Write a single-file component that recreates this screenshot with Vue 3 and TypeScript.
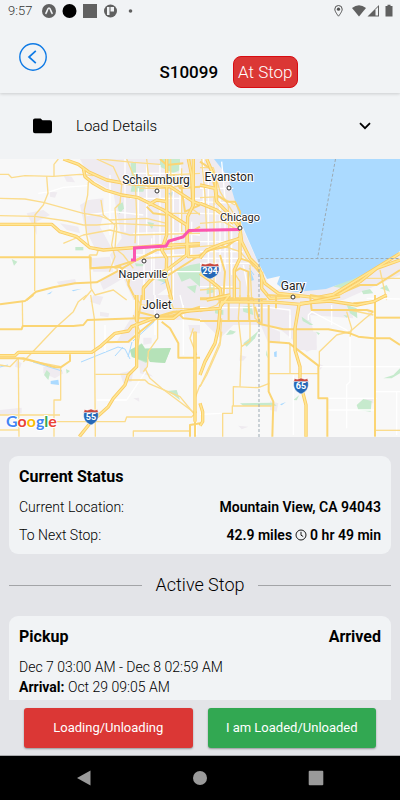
<script setup lang="ts">
import { ref } from 'vue'

interface Tile {
  id: string
  transform: string
  urban: string[]
  parks: string[]
  water: string[]
  streets: string[]
  minor: string[]
  medium: string[]
  major: string[]
}

interface City {
  name: string
  x: number
  y: number
  dotX: number
  dotY: number
  small?: boolean
}

const tiles: Tile[] = [
  {
    id: 'nw',
    transform: 'translate(0 155) scale(0.33333)',
    urban: [
      'M240 12H600V435H540L500 400L450 435H400L370 370L310 405L300 380L350 350L330 300L365 250L350 170L340 110L270 70Z',
      'M265 135L310 130V180L300 215L335 280L290 290L255 220L240 150Z',
      'M80 175L130 165L150 180L110 200V240L95 205Z',
      'M150 110L172 112L165 128L150 125Z',
      'M180 205L235 215L240 235L200 225Z',
      'M190 60L215 65L225 82L200 80Z',
      'M272 310L330 305L340 350L280 350Z',
      'M170 380L225 372L230 385L180 395Z',
    ],
    parks: [
      'M226 276H250V286H226Z', 'M35 312L52 320L42 332Z', 'M392 25L408 20V60L395 72Z', 'M395 92L435 95L430 110H392Z',
      'M352 150L368 142L372 160L358 178Z', 'M440 200L462 205L456 222Z', 'M480 12H540V45L520 55L480 35Z',
      'M528 345L570 330L600 325V395L570 370L545 380Z', 'M470 375L505 365L500 385Z', 'M405 325L435 328L428 334H408Z', 'M560 395L590 390L585 415Z',
    ],
    water: ['M505 115L520 110L515 125Z', 'M480 390L505 372L500 382Z', 'M140 418L158 408L150 417Z', 'M215 406L245 401L220 409Z'],
    streets: [
      'M115 115L150 110L190 97L262 92', 'M330 60V240', 'M375 12V230', 'M415 100V270', 'M440 20V240', 'M462 230V420', 'M480 30V300',
      'M540 30V260', 'M400 55H600', 'M390 130H600', 'M400 235L520 232L600 240', 'M400 300H600', 'M440 350H600', 'M520 90V435', 'M575 200V320',
      'M432 270V435', 'M455 250V380', 'M260 180L340 170L430 180',
    ],
    minor: [
      'M0 58H25L35 68L75 62L160 64L240 58L280 62', 'M162 64V28L175 12', 'M0 130L75 132L130 142L250 175L300 183L330 195L440 190L500 205',
      'M140 64L144 115L130 150L105 180V185', 'M0 182L105 184L200 198L250 210H290L350 205L500 213', 'M104 184V408', 'M265 80L263 120L253 165L260 240L268 278L295 285L290 300H268',
      'M290 12L340 35L365 90L360 145L345 160L350 220L345 280L370 300L400 340', 'M303 135L310 180L345 210L335 270L345 305L328 350',
      'M190 265L250 240L330 225L390 240L600 235', 'M268 300L273 400L285 420L340 405L380 435', 'M300 12L400 22L480 28', 'M405 60L410 180L405 265',
      'M380 12L400 60L450 100', 'M420 100L500 100L580 85', 'M500 60L600 55', 'M512 12L515 435', 'M545 40V230', 'M570 12L575 160L600 180', 'M250 435L275 405',
      'M335 335L370 350L390 400', 'M430 310L600 300', 'M500 175L600 175', 'M440 12L445 60L500 80',
    ],
    medium: [
      'M0 307H272V340L345 335L410 315L470 285', 'M80 435L108 410L160 397L225 385L290 382L350 350L410 315L470 285L600 273', 'M540 70L555 170L600 150',
      'M272 340L360 335L390 360L385 390L408 435', 'M520 60L540 100L600 95', 'M500 260L540 250L600 215', 'M480 12L500 30L550 25', 'M490 370L600 300',
      'M440 155L460 175L500 180', 'M430 435V395L490 350',
    ],
    major: [
      'M0 208H155L180 230L230 245L270 278L310 285L480 272L600 266', 'M190 12L235 28L265 50L320 75L375 85L450 90L510 95L580 140L600 148',
      'M250 40L255 65L280 85L315 105L365 120L415 128L490 165L560 210L565 305H600', 'M500 12V240L485 285L500 310L498 370L515 435',
      'M445 150L470 135L500 140', 'M565 12L575 60L580 150L563 185L560 300L500 345L460 365L430 400V435', 'M580 12V150',
    ],
  },
  {
    id: 'ne',
    transform: 'translate(200 155) scale(0.33333)',
    urban: ['M0 12H45L85 60L130 225L175 325L215 405L380 400L450 375L570 310L600 300V360L430 435H0Z'],
    parks: ['M20 400L40 390L48 410L20 418Z', 'M400 395L480 355L530 345L430 400Z', 'M485 408L510 402L520 415L490 418Z', 'M0 345L15 340V365Z', 'M540 400L560 390L570 410Z'],
    water: ['M145 350L152 347L162 375L152 378Z'],
    streets: [
      'M0 100L100 100', 'M0 140L110 145', 'M0 175L110 178', 'M0 260H120', 'M0 290H130', 'M0 310H140', 'M0 395H100', 'M25 60V330', 'M45 150V435',
      'M60 130V350', 'M75 200V435', 'M95 190V360', 'M10 12V150', 'M65 20L75 130', 'M130 330L150 435', 'M0 325H150',
    ],
    minor: [
      'M0 38H40L60 110L110 190L125 240', 'M5 12L15 120L20 230', 'M0 128L60 125L105 150', 'M42 125V430', 'M0 205L70 200L120 230', 'M85 150L90 430',
      'M0 275L60 270L120 290L160 335', 'M150 330L155 435', 'M30 435V350', 'M0 405L60 400L120 400', 'M500 370H600', 'M540 345L560 435', 'M100 350L120 380V435',
    ],
    medium: [
      'M0 20L30 40L50 120L80 140H105L120 170V230', 'M0 300L30 285L80 275L120 245', 'M120 310L150 320L190 365', 'M103 435V350L120 340L145 350V435',
      'M400 425L480 390H530L600 345', 'M60 300L75 350L70 435', 'M0 430H160',
    ],
    major: [
      'M0 90L45 100L50 140L90 180L120 220L125 260L150 310L175 335L195 385L235 415L350 428L400 418L600 295', 'M120 235V310L103 345V435',
      'M20 12L45 70L50 130', 'M0 145L50 165L100 205', 'M0 310L20 285L70 265L120 250', 'M185 350V400L210 430L300 424', 'M0 355L35 380L60 400L65 435',
      'M340 430L410 422L480 380L530 340L600 315',
    ],
  },
  {
    id: 'sw',
    transform: 'translate(0 295) scale(0.33333)',
    urban: [
      'M415 0H600V70L530 75L480 60L420 80L390 145L350 140L380 90L400 60Z', 'M280 0L310 5L300 30L270 20Z', 'M50 195L65 205L60 220L45 215Z', 'M130 215L180 215L190 235L165 250L130 235Z',
      'M415 175L440 185V230L460 245L420 235Z', 'M360 235L400 225L395 260L370 265Z', 'M300 50L328 55L325 67L300 63Z', 'M400 310L417 308L418 320Z', 'M430 128H455V145L430 150Z',
      'M0 345L65 338V355L0 360Z', 'M565 90H600V115H570Z',
    ],
    parks: ['M390 165L425 145L435 160L513 159L495 203L450 200L440 180V205L395 185Z', 'M140 225L150 235L145 255L132 240Z', 'M198 222L210 228L200 236Z', 'M500 288L530 285L540 315L520 300Z'],
    water: ['M152 258L175 254L177 270L152 267Z'],
    streets: ['M290 315H380L440 225', 'M315 90V170', 'M465 0V120', 'M550 30V180', 'M580 200L590 420', 'M540 0L550 40'],
    minor: [
      'M67 20L68 95', 'M70 200L165 100L220 50L235 20L260 0', 'M272 0L283 70L286 425', 'M55 190L57 425', 'M182 215V315H162V425', 'M286 238H385', 'M0 360H180',
      'M170 380H375L380 366H575L590 350', 'M400 425V408H570', 'M435 220L450 250L485 280L585 355', 'M385 255H435L445 265L540 305L585 360', 'M0 405H57',
      'M473 68V130L445 170L442 215L430 230', 'M400 60L420 110L412 160', 'M505 0L520 40L600 42', 'M580 100L570 130L590 180', 'M400 0L425 30L520 40', 'M0 210L30 215L55 190L182 215',
      'M585 355V425', 'M600 270L585 310V360',
    ],
    medium: [
      'M0 28L75 18L100 0', 'M0 103H65L68 93H220L250 90L262 75L410 70L500 68L600 40', 'M0 190H70L165 217H182L210 198V178', 'M315 142L385 140L420 110L470 70L520 60L600 35',
      'M485 80L510 100L535 145V188H600', 'M412 0V50L470 65L520 50L600 45', 'M425 0L420 40L410 100', 'M570 425V390L600 385', 'M470 68L530 50L550 70L600 75', 'M585 190V425',
    ],
    major: ['M0 182H45L55 172H275L300 155L345 115L385 108L395 95L460 70H520L545 50L600 45', 'M410 85V215L385 240L375 270L340 310L325 335L270 385L238 425', 'M585 110V380', 'M410 0V80'],
  },
  {
    id: 'se',
    transform: 'translate(200 295) scale(0.33333)',
    urban: [
      'M0 0H330L400 20L450 30L460 70L330 60L350 160L320 170L250 110L210 90H100L60 130L0 70Z', 'M180 85L240 110V145H205Z', 'M120 180L140 185L130 197H118Z', 'M210 318L235 325L230 350L210 345Z',
      'M270 100L300 110L350 110V165H285Z', 'M115 392L145 395L125 403Z', 'M500 40L520 50L510 68Z', 'M355 205L370 212L360 225Z', 'M495 312H520V325H500Z',
    ],
    parks: [
      'M128 35L155 32L160 60L130 50Z', 'M78 120L90 105L108 110L98 118Z', 'M130 145L175 108L165 130L140 155Z', 'M305 65L340 90L330 90L308 78Z', 'M440 30L470 40L472 70L450 55Z',
      'M470 330L490 312L515 318L512 350L475 345Z', 'M550 250L580 240L600 220V235L575 250Z', 'M120 325L220 323L230 332H130Z', 'M200 165L204 190L198 180Z', 'M348 110L360 115L355 120Z', 'M280 315L298 300L290 316Z', 'M45 40L70 45V60L45 55Z', 'M430 60L445 62L440 68Z',
    ],
    water: ['M222 172L230 168V186L223 185Z', 'M240 328L258 321L245 331Z'],
    streets: [
      'M0 38H210L270 45V130', 'M270 60V130', 'M325 75V60L335 50L440 105L450 120V260L440 270V400', 'M350 215H600', 'M385 310H530', 'M525 290H600', 'M590 290V420', 'M0 358L65 355',
      'M280 240V420', 'M385 345H525', 'M395 30V90', 'M500 10L600 12',
    ],
    minor: [
      'M120 0L115 70L124 150L120 275', 'M68 425V355H97V333H215', 'M124 155L150 138V80', 'M100 333V275L175 278L208 265', 'M208 236H355', 'M270 145V236', 'M358 215V170L410 120L450 110L490 75L520 50',
      'M440 50L455 100L450 125', 'M0 50L50 30L75 0', 'M160 10L165 70L190 90', 'M65 110L60 150L20 240L0 275', 'M525 406H600', 'M0 275L30 210L60 140L65 70', 'M450 45L520 60',
    ],
    medium: [
      'M0 78H170L180 87L250 103H385L450 115L475 125L520 130H570L600 150', 'M206 30V290L220 320L217 425', 'M208 140L268 145L355 212V310H382V425', 'M525 0V425', 'M525 68H600', 'M330 0L335 45H500L520 50',
      'M145 0L148 78', 'M86 0V78', 'M228 0V40', 'M185 10V85', 'M60 25L55 0', 'M460 25L520 20L560 0', 'M200 0L300 5', 'M0 13H200', 'M165 35L180 85', 'M390 10L330 0',
    ],
    major: [
      'M298 25L285 100V165L300 215V260L318 330V425', 'M0 45L60 40L65 20L230 22L300 28L350 18L420 3', 'M300 25L390 18L470 30L520 20L560 0', 'M60 45L55 100L45 145L15 200L0 240', 'M88 0L60 35', 'M0 325L8 350V380L0 392', 'M20 15L90 0',
    ],
  },
]

const cities: City[] = [
  { name: 'Schaumburg', x: 156, y: 184, dotX: 157, dotY: 191 },
  { name: 'Evanston', x: 229, y: 181, dotX: 229, dotY: 188 },
  { name: 'Naperville', x: 143, y: 278, dotX: 144, dotY: 261, small: true },
  { name: 'Gary', x: 293, y: 290, dotX: 293, dotY: 297 },
  { name: 'Joliet', x: 157, y: 309, dotX: 157, dotY: 316 },
  { name: 'Chicago', x: 240, y: 221, dotX: 240, dotY: 228, small: true },
]

const shields = [
  { label: '294', x: 210, y: 271, scale: 1.25 },
  { label: '65', x: 301, y: 386, scale: 1 },
  { label: '55', x: 91, y: 417, scale: 1 },
]

const detailsOpen = ref<boolean>(false)
</script>

<template>
  <div class="screen">
    <header class="top">
      <div class="status-bar">
        <span class="time">9:57</span>
        <svg class="status-left" viewBox="0 0 96 16" aria-hidden="true">
          <circle cx="7" cy="8" r="7" fill="#606060" />
          <path d="M3.5 10.8C5 9.5 5.4 5 7 5s2 4.5 3.5 5.8" fill="none" stroke="#f1f3f5" stroke-width="1.6" />
          <circle cx="27.5" cy="8" r="7" />
          <path d="M41 1h14v14H41z" fill="#606060" />
          <circle cx="68.500" cy="8" r="6.500" fill="#606060" />
          <path d="M65 4h2.500v8H65zM68.500 4H72v4.500h-3.500z" fill="#f1f3f5" />
          <circle cx="88.500" cy="8" r="1.800" fill="#606060" />
        </svg>
        <svg class="status-right" viewBox="0 0 60 14" aria-hidden="true">
          <path d="M4.500 1.500a3.700 3.700 0 0 0-3.700 3.700c0 2.600 3.700 7 3.700 7s3.700-4.400 3.700-7a3.700 3.700 0 0 0-3.700-3.700z" fill="none" stroke="#505050" />
          <circle cx="4.500" cy="5.200" r="1.600" fill="#505050" />
          <path d="M18 4Q25-1.500 32 4L25 12.500z" fill="#606060" />
          <path d="M33.500 12.500L45 1v11.500z" fill="#606060" />
          <path d="M41.500 5.500L44 3v8.500h-2.500z" fill="#f1f3f5" />
          <path d="M51.500 2h2V.8h3V2h2v10.500h-7z" fill="#606060" />
        </svg>
      </div>
      <button class="back" type="button" aria-label="Back">
        <svg viewBox="0 0 28 28" fill="none" stroke="#0f7ae5" stroke-width="1.4">
          <circle cx="14" cy="14" r="13.200" />
          <path d="M16.800 7.800L10 14l6.800 6.200" stroke-width="1.700" />
        </svg>
      </button>
      <div class="title-row">
        <h1>S10099</h1>
        <span class="pill">At Stop</span>
      </div>
    </header>

    <main class="content">
      <button class="details" type="button" :aria-expanded="detailsOpen" @click="detailsOpen = !detailsOpen">
        <svg class="folder" viewBox="0 0 20 16" aria-hidden="true"><path d="M2 0h6l2 2h8a2 2 0 0 1 2 2v9.500a2 2 0 0 1-2 2H2a2 2 0 0 1-2-2V2a2 2 0 0 1 2-2z" /></svg>
        <span>Load Details</span>
        <svg class="chevron" viewBox="0 0 12 8" aria-hidden="true"><path d="M1 1.200l5 5 5-5" fill="none" stroke="#000" stroke-width="1.800" /></svg>
      </button>

      <svg class="map" viewBox="0 159 400 278" preserveAspectRatio="xMidYMid slice" role="img" aria-label="Route map">
        <rect y="159" width="400" height="278" fill="#f8f8f8" />
        <g v-for="t in tiles" :key="t.id" :transform="t.transform">
          <path v-for="d in t.urban" :key="d" :d="d" class="urban" />
          <path v-for="d in t.parks" :key="d" :d="d" class="park" />
          <path v-for="d in t.water" :key="d" :d="d" class="water" />
        </g>
        <path class="forest" d="M130 350L142 344L145 349L171 348L165 363L150 362L147 356V362L132 357Z" />
        <path class="lake" d="M214 159L228 177L242 225L258 262L267 279L280 276L277 284L284 290L296 292L326 289L351 280L382 266L400 251V159Z" />
        <path class="river" d="M0 367L8 365M33 362L62 371M81 362L118 347L125 349L130 359M115 356L123 347M132 342L128 357M133 341L155 321M249 268L254 275" />
        <g v-for="t in tiles" :key="t.id" :transform="t.transform" class="roads">
          <path v-for="d in t.streets" :key="d" :d="d" class="street" />
          <path v-for="d in t.minor" :key="d" :d="d" class="minor" />
          <path v-for="d in t.medium" :key="d" :d="d" class="medium" />
          <path v-for="d in t.major" :key="d" :d="d" class="major" />
          <path v-for="d in t.major" :key="d" :d="d" class="major-core" />
        </g>
        <path class="border" d="M335.500 159L317.500 258.500M259 437V258.500H400" />
        <path class="route" d="M131 260H134.500V248L166 246L169 241L183 237L189 230.500L240 229.500" />
        <g v-for="s in shields" :key="s.label" :transform="`translate(${s.x} ${s.y})`">
          <g :transform="`scale(${s.scale} 1)`">
            <path d="M-6.500-7.500Q-3.500-6 0-8Q3.500-6 6.500-7.500L7.500-4H-7.500Z" fill="#c9483f" stroke="#fff" stroke-width=".5" />
            <path d="M-7-4.500H7C8.500 2 5 6 0 8C-5 6-8.500 2-7-4.500Z" fill="#2468b8" stroke="#fff" stroke-width=".5" />
          </g>
          <text class="shield-text" y="3">{{ s.label }}</text>
        </g>
        <g v-for="c in cities" :key="c.name">
          <circle class="dot" :cx="c.dotX" :cy="c.dotY" r="2" />
          <text class="city" :class="{ small: c.small }" :x="c.x" :y="c.y">{{ c.name }}</text>
        </g>
        <text class="google" x="6" y="427"><tspan fill="#4285f4">G</tspan><tspan fill="#ea4335">o</tspan><tspan fill="#fbbc05">o</tspan><tspan fill="#4285f4">g</tspan><tspan fill="#34a853">l</tspan><tspan fill="#ea4335">e</tspan></text>
      </svg>

      <div class="body">
        <section class="card">
          <h2>Current Status</h2>
          <dl>
            <div class="row">
              <dt>Current Location:</dt>
              <dd>Mountain View, CA 94043</dd>
            </div>
            <div class="row">
              <dt>To Next Stop:</dt>
              <dd>
                42.9 miles
                <svg class="clock" viewBox="0 0 12 12" fill="none" stroke="#000" stroke-width=".9" aria-hidden="true">
                  <circle cx="6" cy="6" r="5" /><path d="M6 2.800V6.200L8.200 7.500" />
                </svg>
                0 hr 49 min
              </dd>
            </div>
          </dl>
        </section>

        <div class="divider"><h2>Active Stop</h2></div>

        <section class="card stop">
          <div class="row">
            <h2>Pickup</h2>
            <h2>Arrived</h2>
          </div>
          <p class="window">Dec 7 03:00 AM - Dec 8 02:59 AM</p>
          <p><strong>Arrival:</strong> Oct 29 09:05 AM</p>
        </section>
      </div>
    </main>

    <footer class="actions">
      <button class="action red" type="button">Loading/Unloading</button>
      <button class="action green" type="button">I am Loaded/Unloaded</button>
    </footer>

    <nav class="system" aria-label="System">
      <button type="button" aria-label="Back"><svg viewBox="0 0 16 16"><path d="M14.500 .5v15L1 8z" /></svg></button>
      <button type="button" aria-label="Home"><svg viewBox="0 0 16 16"><circle cx="8" cy="8" r="7" /></svg></button>
      <button type="button" aria-label="Recents"><svg viewBox="0 0 16 16"><rect x=".7" y=".7" width="14.600" height="14.600" rx="1" /></svg></button>
    </nav>
  </div>
</template>

<style>
body {
  background: #e3e4e8;
}
</style>

<style scoped>
.screen {
  display: flex;
  flex-direction: column;
  height: 100vh;
  background: #e3e4e8;
  color: #000;
  font: 300 14px/20px Roboto, sans-serif;
}
h1, h2, p, dl, dt, dd {
  margin: 0;
}
button {
  font: inherit;
  border: 0;
  cursor: pointer;
}
svg {
  display: block;
  flex: none;
}
.top {
  position: relative;
  z-index: 1;
  flex: none;
  padding-bottom: 5px;
  background: #f1f3f5;
  box-shadow: 0 1px 3px rgba(0, 0, 0, 0.16);
}
.status-bar {
  display: flex;
  align-items: center;
  height: 22px;
  padding: 0 6px 0 8px;
}
.time {
  width: 34px;
  color: #333;
  font-size: 13px;
}
.status-left {
  width: 96px;
  height: 16px;
}
.status-right {
  width: 60px;
  height: 14px;
  margin-left: auto;
}
.back {
  position: absolute;
  top: 43px;
  left: 19px;
  width: 28px;
  height: 28px;
  padding: 0;
  background: none;
}
.title-row {
  display: flex;
  align-items: center;
  justify-content: center;
  gap: 15px;
  margin-top: 34px;
  padding-left: 57px;
}
h1 {
  font-size: 17px;
  font-weight: 500;
}
.pill {
  padding: 0 4px;
  border: 1px solid #d80c12;
  border-radius: 8px;
  background: #db3735;
  color: #fff;
  font-size: 17px;
  line-height: 30px;
}
.content {
  flex: 1;
  min-height: 0;
  overflow-y: auto;
  scrollbar-width: none;
}
.details {
  display: flex;
  align-items: center;
  width: 100%;
  height: 66px;
  padding: 0 29px 0 33px;
  background: #f1f3f5;
  color: #000;
  font-size: 15px;
  text-align: left;
}
.details span {
  flex: 1;
  margin-left: 24px;
}
.folder {
  width: 19px;
  height: 16px;
}
.chevron {
  width: 12px;
  height: 8px;
}
.map {
  width: 100%;
  aspect-ratio: 400 / 278;
}
.urban {
  fill: #efebf0;
}
.park {
  fill: #c6eacd;
}
.forest {
  fill: #b5e2b8;
}
.water, .lake {
  fill: #abdaff;
}
.river {
  fill: none;
  stroke: #abdaff;
}
.roads path {
  fill: none;
  stroke-linejoin: round;
}
.roads .street {
  stroke: #fff;
  stroke-width: 4px;
}
.roads .minor {
  stroke: #fbdc8c;
  stroke-width: 4px;
}
.roads .medium {
  stroke: #fbd574;
  stroke-width: 6px;
}
.roads .major {
  stroke: #facb62;
  stroke-width: 10px;
}
.roads .major-core {
  stroke: #ffe694;
  stroke-width: 5px;
}
.border {
  fill: none;
  stroke: #9caab3;
  stroke-dasharray: 3 2;
}
.route {
  fill: none;
  stroke: #fb55b0;
  stroke-width: 3px;
}
.dot {
  fill: #fff;
  stroke: #333;
}
.city {
  fill: #222;
  stroke: #fff;
  stroke-width: 2px;
  paint-order: stroke;
  font-size: 12px;
  font-weight: 400;
  text-anchor: middle;
}
.small {
  font-size: 11px;
}
.shield-text {
  fill: #fff;
  font-size: 9px;
  font-weight: 700;
  text-anchor: middle;
}
.google {
  stroke: #fff;
  stroke-width: 2px;
  paint-order: stroke;
  font: 700 16px Lato, sans-serif;
}
.body {
  padding: 19px 9px 24px;
}
.card {
  padding: 10px 10px 5px;
  border-radius: 9px;
  background: #f1f3f5;
}
.card h2 {
  font-size: 16px;
  font-weight: 700;
  line-height: 22px;
}
.row {
  display: flex;
  align-items: center;
  justify-content: space-between;
}
dl .row {
  height: 28px;
}
dl {
  padding-top: 5px;
}
dd {
  display: flex;
  align-items: center;
  gap: 3px;
  font-weight: 600;
}
.clock {
  width: 12px;
  height: 12px;
}
.divider {
  display: flex;
  align-items: center;
  gap: 14px;
  margin: 19px 0;
}
.divider::before, .divider::after {
  content: '';
  flex: 1;
  height: 1px;
  background: #a3a4a7;
}
.divider h2 {
  font-size: 18px;
  font-weight: 300;
  line-height: 24px;
}
.card.stop {
  padding-bottom: 48px;
}
.window {
  margin-top: 9px;
}
strong {
  font-weight: 700;
}
.actions {
  display: flex;
  flex: none;
  gap: 15px;
  padding: 8px 24px 7px;
  border-bottom: 1px solid #a9aaad;
}
.action {
  flex: 1;
  height: 40px;
  padding: 0;
  border-radius: 3px;
  color: #fff;
  font-size: 13px;
  font-weight: 400;
  box-shadow: 0 1px 2px rgba(0, 0, 0, 0.35);
}
.red {
  background: #db3735;
}
.green {
  background: #32a852;
}
.system {
  display: flex;
  flex: none;
  align-items: center;
  justify-content: space-around;
  height: 44px;
  padding: 0 26px;
  background: #000;
}
.system button {
  padding: 0;
  background: none;
}
.system svg {
  width: 16px;
  height: 16px;
  fill: #9a9a9a;
}
</style>
